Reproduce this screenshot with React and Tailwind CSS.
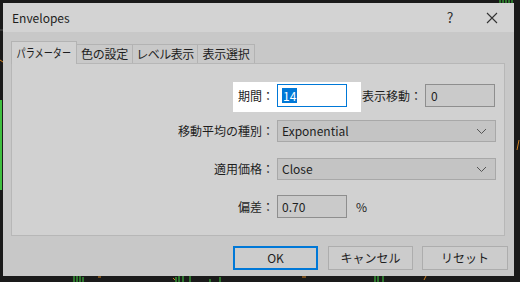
import React from "react";

const F = { fontFamily: '"Noto Sans CJK JP", "Noto Sans", sans-serif' };

function Chevron() {
  return (
    <svg width="11" height="7" viewBox="0 0 11 7" className="mr-[8px]">
      <path d="M1 1 L5.5 5.5 L10 1" fill="none" stroke="#555" strokeWidth="1" />
    </svg>
  );
}

export default function App() {
  return (
    <div className="relative w-[520px] h-[282px] bg-[#1a1a1a] overflow-hidden pl-[3px] pt-[3px]" style={F}>
      <svg className="absolute inset-0" width="520" height="282">
        <line x1="0" y1="30" x2="3" y2="30" stroke="#555" />
        <line x1="1" y1="100" x2="1" y2="190" stroke="#3fbf3f" strokeWidth="2" />
        <line x1="0" y1="60" x2="3" y2="62" stroke="#d08020" />
        <g stroke="#3fcf3f" strokeWidth="1">
          <line x1="500" y1="0" x2="500" y2="14" />
          <line x1="503" y1="0" x2="503" y2="10" />
          <line x1="506" y1="0" x2="506" y2="16" />
          <line x1="509" y1="0" x2="509" y2="12" />
          <line x1="512" y1="0" x2="512" y2="8" />
          <line x1="74" y1="276" x2="74" y2="282" />
          <line x1="77" y1="276" x2="77" y2="282" />
          <line x1="80" y1="276" x2="80" y2="282" />
          <line x1="83" y1="277" x2="83" y2="282" />
          <line x1="176" y1="277" x2="176" y2="282" />
          <line x1="179" y1="276" x2="179" y2="282" />
          <line x1="183" y1="276" x2="183" y2="282" />
          <line x1="190" y1="276" x2="190" y2="282" />
          <line x1="210" y1="279" x2="210" y2="282" />
          <line x1="220" y1="277" x2="220" y2="282" />
          <line x1="375" y1="276" x2="375" y2="282" />
          <line x1="378" y1="276" x2="378" y2="282" />
          <line x1="383" y1="276" x2="383" y2="282" />
        </g>
        <g stroke="#d08020">
          <line x1="98" y1="277" x2="101" y2="277" />
          <line x1="173" y1="278" x2="175" y2="280" />
          <line x1="302" y1="277" x2="306" y2="277" />
          <line x1="424" y1="280" x2="426" y2="276" />
          <line x1="517" y1="150" x2="519" y2="140" />
        </g>
      </svg>

      <div className="relative w-[511px] h-[273px] flex flex-col bg-[#c8c8c8] text-[#1e1e1e] text-[12px]">
        {/* title bar */}
        <div className="h-[29px] bg-[#d3d3d3] flex items-center pl-[9px] shrink-0">
          <span className="flex-1 text-[12px]">Envelopes</span>
          <span className="w-[20px] text-center text-[14px] text-[#333] mr-[26px]">?</span>
          <svg width="12" height="12" viewBox="0 0 12 12" className="mr-[16px]">
            <path d="M1 1 L11 11 M11 1 L1 11" stroke="#333" strokeWidth="1.1" />
          </svg>
        </div>

        <div className="flex flex-col pl-[8px] pt-[8px]">
          {/* tabs */}
          <div className="flex items-end h-[23px] whitespace-nowrap text-[12px]">
            <div className="w-[66px] h-[23px] bg-[#d1d1d1] border border-b-0 border-[#b3b3b3] flex items-center justify-center relative z-10 -mb-px pb-px overflow-hidden">
              <span className="inline-block scale-x-[0.76]">パラメーター</span>
            </div>
            <div className="w-[56px] h-[19px] bg-[#c9c9c9] border border-l-0 border-b-0 border-[#b3b3b3] flex items-center justify-center tracking-[-0.3px]">色の設定</div>
            <div className="w-[65px] h-[19px] bg-[#c9c9c9] border border-l-0 border-b-0 border-[#b3b3b3] flex items-center justify-center tracking-[-0.5px]">レベル表示</div>
            <div className="w-[57px] h-[19px] bg-[#c9c9c9] border border-l-0 border-b-0 border-[#b3b3b3] flex items-center justify-center tracking-[-0.3px]">表示選択</div>
          </div>

          {/* panel */}
          <div className="w-[494px] h-[173px] bg-[#d1d1d1] border border-[#b7b7b7] flex flex-col">
            {/* row 1 */}
            <div className="flex items-start mt-[18px] ml-[221px] h-[30px]">
              <div className="bg-white flex items-start h-[30px] pt-[2px] pr-[14px]">
                <div className="w-[41px] h-[23px] flex items-center justify-end">期間：</div>
                <div className="ml-[3px] w-[70px] h-[23px] bg-white border border-[#0078d7] flex items-center pl-[4px]">
                  <span className="bg-[#0078d7] text-white leading-[15px] px-px">14</span>
                </div>
              </div>
              <div className="h-[23px] mt-[2px] flex items-center ml-px">表示移動：</div>
              <div className="ml-[3px] mt-[2px] w-[70px] h-[23px] bg-[#cacaca] border border-[#8e8e8e] flex items-center pl-[5px]">0</div>
            </div>

            {/* row 2 */}
            <div className="flex items-center mt-[8px] h-[22px]">
              <div className="w-[262px] text-right">移動平均の種別：</div>
              <div className="ml-[3px] w-[219px] h-[22px] bg-[#c4c4c4] border border-[#a8a8a8] flex items-center pl-[4px] justify-between">
                <span>Exponential</span>
                <Chevron />
              </div>
            </div>

            {/* row 3 */}
            <div className="flex items-center mt-[16px] h-[22px]">
              <div className="w-[262px] text-right">適用価格：</div>
              <div className="ml-[3px] w-[219px] h-[22px] bg-[#c4c4c4] border border-[#a8a8a8] flex items-center pl-[4px] justify-between">
                <span>Close</span>
                <Chevron />
              </div>
            </div>

            {/* row 4 */}
            <div className="flex items-center mt-[15px] h-[23px]">
              <div className="w-[262px] text-right">偏差：</div>
              <div className="ml-[3px] w-[70px] h-[23px] bg-[#cacaca] border border-[#8e8e8e] flex items-center pl-[4px]">0.70</div>
              <div className="ml-[9px]">%</div>
            </div>
          </div>

          {/* buttons */}
          <div className="flex mt-[10px] ml-[222px] gap-[10px]">
            <div className="w-[85px] h-[24px] border-2 border-[#0078d7] bg-[#cccccc] flex items-center justify-center">OK</div>
            <div className="w-[85px] h-[24px] border border-[#adadad] bg-[#cccccc] flex items-center justify-center">キャンセル</div>
            <div className="w-[86px] h-[24px] border border-[#adadad] bg-[#cccccc] flex items-center justify-center -ml-px">リセット</div>
          </div>
        </div>
      </div>
    </div>
  );
}
